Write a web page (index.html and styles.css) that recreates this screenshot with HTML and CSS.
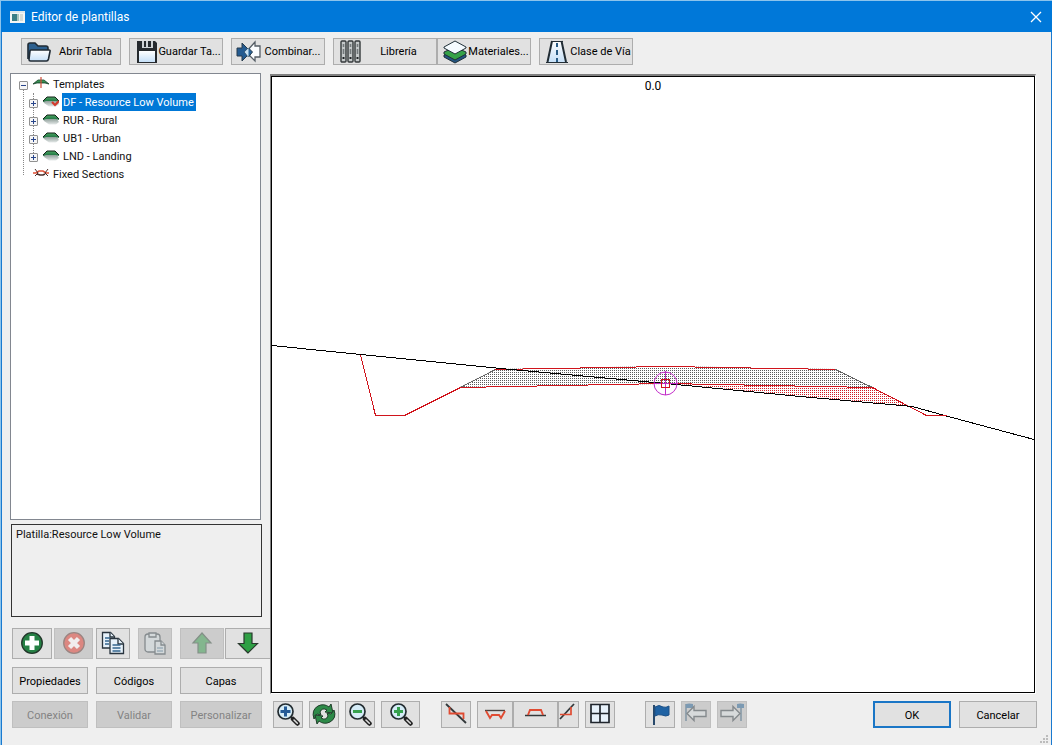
FILE: index.html
```html
<!DOCTYPE html>
<html lang="es">
<head>
<meta charset="utf-8">
<title>Editor de plantillas</title>
<link rel="stylesheet" href="styles.css">
</head>
<body>
<svg class="defs" width="0" height="0" aria-hidden="true">
  <defs>
    <linearGradient id="hill" x1="0" y1="0" x2="0" y2="1"><stop offset="0" stop-color="#4aa862"/><stop offset="1" stop-color="#1a6b3e"/></linearGradient>
    <linearGradient id="slab" x1="0" y1="0" x2="0" y2="1"><stop offset="0" stop-color="#8f9f99"/><stop offset="1" stop-color="#e6eaea"/></linearGradient>
    <linearGradient id="sky" x1="0" y1="0" x2="0" y2="1"><stop offset="0" stop-color="#fff"/><stop offset="1" stop-color="#c6e0f8"/></linearGradient>
    <symbol id="section" viewBox="0 0 16 12">
      <path d="M0 6h14l2 3-3 2.500H6L1 8z" fill="url(#slab)"/>
      <path d="M0 6l4-4h8l4 4v1l-3-1H3L0 7z" fill="url(#hill)"/>
      <path d="M0 6l4-4h8l4 4" fill="none" stroke="#142018"/>
    </symbol>
    <symbol id="lens" viewBox="0 0 24 24">
      <path d="M15 15l3 3" stroke="#222" stroke-width="2"/>
      <path d="M17 17l4.500 4.500" stroke="#222" stroke-width="4.500" stroke-linecap="round"/>
      <path d="M18 18l3.300 3.300" stroke="#ddd" stroke-width="1.600" stroke-linecap="round"/>
      <circle cx="9.500" cy="9.500" r="7.500" fill="#d5ecf7" stroke="#222b30" stroke-width="1.700"/>
    </symbol>
  </defs>
</svg>
<div class="window">
  <header class="titlebar">
    <svg width="15" height="12" viewBox="0 0 15 12"><path d="M0 0h15v12H0z" fill="#f3f6f4"/><path d="M2 3h5v7H2z" fill="#3a7f86"/><path d="M7 3h2v7H7z" fill="#a9c5bd"/><path d="M10 3h3v7h-3z" fill="#d5dbd6"/><path d="M0 0h15v2H0z" fill="#dfe8ea"/></svg>
    <h1>Editor de plantillas</h1>
    <button class="close" aria-label="Cerrar"><svg width="12" height="12" viewBox="0 0 12 12"><path d="M1 1l10 10M11 1L1 11" stroke="#fff" stroke-width="1.300"/></svg></button>
  </header>

  <nav class="toolbar">
    <button class="btn tool tool-wide"><svg width="26" height="24" viewBox="0 0 26 24"><path d="M2 19V5q0-2 2-2h5l3 3h8q2 0 2 2v3" fill="#2d608f" stroke="#202b35" stroke-width="1.600"/><path d="M5 10h18q1.500 0 1 1.500L22.500 19q-.5 2-2 2H4.500Q3 21 3 19.500L4 11q0-1 1-1z" fill="url(#sky)" stroke="#202b35" stroke-width="1.600"/></svg><span>Abrir Tabla</span></button>
    <button class="btn tool tool-tight"><svg width="22" height="24" viewBox="0 0 22 24"><path d="M1 1h18l2 2v20H1z" fill="#262a2e"/><path d="M6 1h11v7H6z" fill="#cfd3d6"/><path d="M8 1h2v6H8zM12 1h3v6h-3z" fill="#262a2e"/><path d="M3 11h16v11H3z" fill="url(#sky)"/></svg><span>Guardar Ta...</span></button>
    <button class="btn tool"><svg width="26" height="24" viewBox="0 0 26 24"><path d="M1 8h5V3l9 9-9 9v-5H1V8z" fill="#245b91" stroke="#263b4c"/><path d="M24 6h-5V2l-9 10 9 9v-4h5z" fill="#fbfdff" stroke="#555e66" stroke-width="1.300"/><path d="M12.500 8l4 4-4 5-4-5z" fill="#286399" stroke="#263b4c"/><path d="M12.500 8v9l-4-5z" fill="#c8e3f5"/></svg><span>Combinar...</span></button>
    <div class="joined">
      <button class="btn tool tool-wide"><svg width="24" height="24" viewBox="0 0 24 24"><g fill="#c5c9ca" stroke="#34393b" stroke-width="1.400"><rect x="3" y="1" width="5" height="21" rx="1"/><rect x="10" y="1" width="5" height="21" rx="1"/><rect x="17" y="1" width="5" height="21" rx="1"/></g><path d="M5.500 4v3M12.500 4v3M19.500 4v3M5.500 9v5M12.500 9v5M19.500 9v5" stroke="#73797b" stroke-width="1.600"/><path d="M4.500 18h2M11.500 18h2M18.500 18h2" stroke="#202426" stroke-width="2"/></svg><span>Librería</span></button>
      <button class="btn tool"><svg width="26" height="24" viewBox="0 0 26 24"><g stroke="#203038"><path d="M2 15l11-5 11 5v2l-11 6-11-6z" fill="#245581"/><path d="M2 12l11-5 11 5v2l-11 6-11-6z" fill="#36a248"/><path d="M2 7l11-6 11 6v1l-11 6L2 8z" fill="#f5fbff"/></g></svg><span>Materiales...</span></button>
    </div>
    <button class="btn tool tool-tight"><svg width="24" height="24" viewBox="0 0 24 24"><path d="M6 1h10l5 21H1z" fill="url(#sky)"/><path d="M6 1L1.500 22M15.500 1L20 22" stroke="#222d35" stroke-width="2"/><path d="M5 1.500h12M0 22.500h22" stroke="#222d35"/><path d="M11 3v4M11 10v5M11 18v4" stroke="#295b84" stroke-width="2"/></svg><span>Clase de Vía</span></button>
  </nav>

  <main class="work">
    <section class="side">
      <div class="tree">
        <ul>
          <li>
            <div class="row"><button class="twist" aria-label="Contraer"><svg width="7" height="7" viewBox="0 0 7 7"><path d="M1 3h5v1H1z" fill="#28458b"/></svg></button><svg width="16" height="12" viewBox="0 0 16 12"><path d="M0 7l5-4h6l5 4-4-1H4z" fill="url(#hill)" stroke="#174027" stroke-width=".8"/><path d="M8 0v11" stroke="#d14b38" stroke-width="1.200"/></svg><span>Templates</span></div>
            <ul>
              <li class="row"><button class="twist" aria-label="Expandir"><svg width="7" height="7" viewBox="0 0 7 7"><path d="M1 3h2V1h1v2h2v1H4v2H3V4H1z" fill="#28458b"/></svg></button><svg width="16" height="12" viewBox="0 0 16 12"><use href="#section"/><path d="M9 7l3 3 4-4" fill="none" stroke="#d33a2c" stroke-width="2.200"/></svg><span class="selected">DF - Resource Low Volume</span></li>
              <li class="row"><button class="twist" aria-label="Expandir"><svg width="7" height="7" viewBox="0 0 7 7"><path d="M1 3h2V1h1v2h2v1H4v2H3V4H1z" fill="#28458b"/></svg></button><svg width="16" height="12"><use href="#section"/></svg><span>RUR - Rural</span></li>
              <li class="row"><button class="twist" aria-label="Expandir"><svg width="7" height="7" viewBox="0 0 7 7"><path d="M1 3h2V1h1v2h2v1H4v2H3V4H1z" fill="#28458b"/></svg></button><svg width="16" height="12"><use href="#section"/></svg><span>UB1 - Urban</span></li>
              <li class="row"><button class="twist" aria-label="Expandir"><svg width="7" height="7" viewBox="0 0 7 7"><path d="M1 3h2V1h1v2h2v1H4v2H3V4H1z" fill="#28458b"/></svg></button><svg width="16" height="12"><use href="#section"/></svg><span>LND - Landing</span></li>
            </ul>
          </li>
          <li class="row leaf"><svg width="16" height="12" viewBox="0 0 16 12"><path d="M0 6h3l3-2h4l3 2h3" fill="none" stroke="#e05238" stroke-width="1.600"/><path d="M2 2l3 4-3 3M15 2l-3 4 3 3" fill="none" stroke="#4b302c"/><path d="M4 7l3 1h3l2-1" fill="none" stroke="#4b302c" stroke-width="1.600"/></svg><span>Fixed Sections</span></li>
        </ul>
      </div>
      <div class="info">Platilla:Resource Low Volume</div>
      <div class="icons">
        <button class="btn w40" aria-label="Agregar"><svg width="24" height="24" viewBox="0 0 24 24"><circle cx="12" cy="12" r="10.300" fill="#258044" stroke="#22362a" stroke-width="1.300"/><path d="M9.500 5h5v4.500H19v5h-4.500V19h-5v-4.500H5v-5h4.500z" fill="#fff"/></svg></button>
        <button class="btn w39" disabled aria-label="Eliminar"><svg width="24" height="24" viewBox="0 0 24 24"><circle cx="12" cy="12" r="10.300" fill="#dc8781" stroke="#9b8582" stroke-width="1.300"/><path d="M7.500 7.500l9 9M16.500 7.500l-9 9" stroke="#f1eded" stroke-width="4.500"/></svg></button>
        <button class="btn w34 after-pair" aria-label="Copiar"><svg width="24" height="24" viewBox="0 0 24 24"><g fill="#e6f1fa" stroke="#29343e" stroke-width="1.300"><path d="M1.500 1.500h8l4 4V17h-12z"/><path d="M9 1.500V6h4.500"/><path d="M9 7.500h8.500l5 5V22.500H9z"/><path d="M17 7.500V13h5.500"/></g><path d="M4 7h5M4 10h4M4 13h4M11.500 14h8M11.500 17h8M11.500 20h8" stroke="#34658f" stroke-width="1.300"/></svg></button>
        <button class="btn w34 spaced" disabled aria-label="Pegar"><svg width="24" height="24" viewBox="0 0 24 24"><g fill="#d3d8da" stroke="#858b8e" stroke-width="1.300"><rect x="2" y="3" width="15" height="18" rx="3"/><path d="M6 2h7v4H6z"/><path d="M12 10h6l4 4v9H12z"/><path d="M18 10v4h4"/></g><path d="M14 17h6M14 20h6" stroke="#8299a9"/></svg></button>
        <button class="btn w44 spaced" disabled aria-label="Subir"><svg width="24" height="24" viewBox="0 0 24 24"><path d="M12 2l9 10h-5v10H8V12H3z" fill="#83b68e" stroke="#849088" stroke-width="1.200"/></svg></button>
        <button class="btn w45" aria-label="Bajar"><svg width="24" height="24" viewBox="0 0 24 24"><path d="M12 22L2.500 12.500H8V2h8v10.500h5.500z" fill="#2fa045" stroke="#29392d" stroke-width="1.200"/></svg></button>
      </div>
      <div class="actions">
        <button class="btn">Propiedades</button><button class="btn">Códigos</button><button class="btn">Capas</button>
        <button class="btn" disabled>Conexión</button><button class="btn" disabled>Validar</button><button class="btn" disabled>Personalizar</button>
      </div>
    </section>

    <section class="view">
      <div class="canvas">
        <svg class="drawing" viewBox="272 77 762 615" role="img" aria-label="Sección transversal">
          <defs>
            <pattern id="dots" width="2" height="2" patternUnits="userSpaceOnUse"><rect width="1" height="1" fill="#5a5a5a"/></pattern>
            <pattern id="reddots" width="2" height="2" patternUnits="userSpaceOnUse"><rect width="1" height="1" fill="#d01c24"/></pattern>
          </defs>
          <text class="station" x="653" y="90" text-anchor="middle">0.0</text>
          <path d="M460 387L496 369L665 366L836 369L873 388L665 384z" fill="url(#dots)"/>
          <path d="M680 384L873 388L909 406L800 396z" fill="url(#reddots)"/>
          <g fill="none" shape-rendering="crispEdges">
            <path d="M460.500 387.500L495.500 369.500M835.500 369.500L872.500 387.500" stroke="#666"/>
            <path d="M495.500 369.500L665.500 366.500L835.500 369.500M360.500 354.500L375.500 415.500H404.500L460.500 387.500L665.500 383.500L872.500 387.500L926.500 415.500H946.500" stroke="#d0141c"/>
            <path d="M272 345.500L360.500 354.500L500.500 368.500L665.500 383.500L800.500 396.500L912.500 406.500L944.500 415.500L1034 439.500" stroke="#000"/>
            <path d="M926.500 415.500H946.500" stroke="#d0141c"/>
            <path d="M665.500 371v24M654 383.500h24" stroke="#c22bc8"/>
            <path d="M661.500 379.500h8v8h-8z" stroke="#d0141c"/>
          </g>
          <circle cx="665.500" cy="383.500" r="11.500" fill="none" stroke="#c22bc8"/>
        </svg>
      </div>
      <footer class="controls">
        <div class="group">
          <button class="btn w30" aria-label="Zoom ventana"><svg width="24" height="24" viewBox="0 0 24 24"><use href="#lens"/><path d="M9.500 4.500v10M4.500 9.500h10" stroke="#245a96" stroke-width="3"/></svg></button>
          <button class="btn w30" aria-label="Actualizar"><svg width="24" height="24" viewBox="0 0 24 24"><g fill="#2d8a48" stroke="#203d2a" stroke-linejoin="round"><path d="M2 17Q-1 8 6 4q6-3 11 1l2-3 2 9-8-1 2-2Q10 5 8 10l1 3-4-1z"/><path d="M22 8q3 8-4 12-6 3-11-1l-2 3-2-9 8 1-2 2q5 3 7-2l-1-3 4 1z"/></g></svg></button>
          <button class="btn w30" aria-label="Alejar"><svg width="24" height="24" viewBox="0 0 24 24"><use href="#lens"/><path d="M5 9.500h9" stroke="#36a14e" stroke-width="3"/></svg></button>
          <button class="btn w39" aria-label="Acercar"><svg width="24" height="24" viewBox="0 0 24 24"><use href="#lens"/><path d="M9.500 5v9M5 9.500h9" stroke="#36a14e" stroke-width="3"/></svg></button>
        </div>
        <div class="group">
          <button class="btn w30" aria-label="Talud mixto"><svg width="24" height="24" viewBox="0 0 24 24"><path d="M2 2l20 19" stroke="#33383a" stroke-width="1.800"/><path d="M5.500 5v6.500h14V17" fill="none" stroke="#e04b32" stroke-width="1.800"/></svg></button>
          <div class="joined">
            <button class="btn w36" aria-label="Corte"><svg width="24" height="24" viewBox="0 0 24 24"><path d="M2 8.500h20" stroke="#4a4340" stroke-width="1.400"/><path d="M3 9l4 7 2-3h7l2 3 4-7" fill="none" stroke="#e04b32" stroke-width="1.900"/></svg></button>
            <button class="btn w45" aria-label="Terraplén"><svg width="24" height="24" viewBox="0 0 24 24"><path d="M1 13.500h21" stroke="#33383a" stroke-width="1.500"/><path d="M4 13l2-5h11l2 5" fill="none" stroke="#e04b32" stroke-width="1.900"/></svg></button>
            <button class="btn w21" aria-label="Ladera"><svg width="20" height="24" viewBox="0 0 20 24"><path d="M1 17L15 2" stroke="#33383a" stroke-width="1.800"/><path d="M1 12.500h11V5" fill="none" stroke="#e04b32" stroke-width="1.700"/></svg></button>
          </div>
          <button class="btn w30" aria-label="Cuadrícula"><svg width="24" height="24" viewBox="0 0 24 24"><path d="M3 2.500h18v18H3zM12 2.500v18M3 11.500h18" fill="#e8f2fb" stroke="#20262d" stroke-width="1.700"/></svg></button>
        </div>
        <div class="group">
          <button class="btn w30" aria-label="Marcar"><svg width="24" height="24" viewBox="0 0 24 24"><path d="M6 3v20" stroke="#28496b" stroke-width="2"/><path d="M7 5q4-3 8 0 3 1 6-1v9q-3 2-7 0-4-1-7 1z" fill="#1f62a3" stroke="#1c5087"/></svg></button>
          <button class="btn w30" disabled aria-label="Anterior"><svg width="26" height="24" viewBox="0 0 26 24"><path d="M3 2v17" stroke="#8296a5" stroke-width="1.500"/><path d="M3 2q3-1 7 0v4H3z" fill="#7c9ab3"/><path d="M4 11.500l7-7v4h12v6H11v4z" fill="#d7dadb" stroke="#858a8d" stroke-width="1.400"/></svg></button>
          <button class="btn w30" disabled aria-label="Siguiente"><svg width="26" height="24" viewBox="0 0 26 24"><path d="M22 2v17" stroke="#8296a5" stroke-width="1.500"/><path d="M18 2q3-1 7 0v4h-7z" fill="#7c9ab3"/><path d="M21 11.500l-7-7v4H2v6h12v4z" fill="#d7dadb" stroke="#858a8d" stroke-width="1.400"/></svg></button>
        </div>
        <div class="dialog">
          <button class="btn primary">OK</button>
          <button class="btn">Cancelar</button>
        </div>
      </footer>
    </section>
  </main>
  <svg class="grip" width="9" height="9" viewBox="0 0 9 9"><path d="M6 0h2v2H6zM3 3h2v2H3zM6 3h2v2H6zM0 6h2v2H0zM3 6h2v2H3zM6 6h2v2H6z" fill="#bcbcbc"/></svg>
</div>
</body>
</html>
```

FILE: styles.css
```css
* { box-sizing: border-box; }
body {
  margin: 0;
  padding: 1px 0 0 1px;
  background: #8cc4ec;
  color: #111;
  font: 11px/18px Roboto, "Liberation Sans", sans-serif;
}
.defs { position: absolute; }
svg { display: block; flex: none; }
ul { list-style: none; margin: 0; padding: 0; }

.window {
  position: relative;
  display: flex;
  flex-direction: column;
  min-height: calc(100vh - 1px);
  background: #efefef;
  border: solid #1a7ad0;
  border-width: 0 1px 1px;
}
.titlebar {
  display: flex;
  align-items: center;
  gap: 6px;
  height: 31px;
  margin: 0 -1px;
  padding: 0 10px 0 9px;
  background: #0078d9;
  color: #fff;
}
.titlebar h1 { flex: 1; margin: 0; font-size: 12px; font-weight: 400; }
.close { display: flex; padding: 0; border: 0; background: none; }

.btn {
  display: flex;
  flex: none;
  align-items: center;
  justify-content: center;
  height: 27px;
  padding: 0;
  border: 1px solid #adadad;
  background: #e1e1e1;
  color: #000;
  font: inherit;
  white-space: nowrap;
}
.btn:disabled { background: #cccccc; border-color: #bfbfbf; color: #838383; }
.toolbar { display: flex; gap: 8px; padding: 6px 19px 8px; }
.joined { display: flex; }
.tool { width: 94px; padding: 0 1px 0 4px; }
.tool span { flex: 1; padding-top: 1px; text-align: center; }
.tool-wide { width: 100px; }
.tool-tight { padding-left: 6px; }
.joined .tool-wide { width: 104px; }

.work { display: flex; flex: 1; padding: 0 15px 17px 8px; }
.side { display: flex; flex-direction: column; width: 260px; flex: none; }
.tree {
  flex: 1;
  margin-right: 9px;
  padding: 1px 0 0 8px;
  border: 1px solid #828790;
  background: #fff;
}
.tree > ul { position: relative; }
.tree > ul::before, .tree li > ul::before {
  content: "";
  position: absolute;
  left: 4px;
  top: 14px;
  bottom: 8px;
  border-left: 1px dotted #888;
}
.tree li > ul { position: relative; padding-left: 10px; }
.tree li > ul::before { left: 14px; top: 0; bottom: 12px; }
.row { display: flex; align-items: center; height: 18px; }
.row > svg { margin: 0 3px 2px 5px; }
.leaf > svg { margin-left: 14px; }
.row span { padding: 2px 2px 0 1px; line-height: 16px; }
.row .selected { background: #0078d7; color: #fff; }
.twist {
  position: relative;
  width: 9px;
  height: 9px;
  margin-top: 2px;
  padding: 0;
  border: 1px solid #919191;
  border-radius: 1px;
  background: #f6f6f6;
}
.info {
  height: 93px;
  margin: 4px 8px 11px 1px;
  padding: 1px 4px;
  border: 1px solid #333;
}
.icons { display: flex; padding-left: 2px; overflow: hidden; }
.icons .btn { height: 31px; padding-bottom: 1px; }
.icons .w39 { margin-left: 2px; }
.icons .after-pair { margin-left: 3px; }
.icons .spaced { margin-left: 8px; }
.icons .w45 { margin-left: 1px; border-right: 0; }
.w21 { width: 21px; }
.w30 { width: 30px; }
.w34 { width: 34px; }
.w36 { width: 36px; }
.w39 { width: 39px; }
.w40 { width: 40px; }
.w44 { width: 44px; }
.w45 { width: 45px; }
.actions {
  display: grid;
  grid-template-columns: 76px 76px 82px;
  gap: 7px 8px;
  padding: 8px 0 0 2px;
}
.actions .btn, .dialog .btn { padding-top: 2px; }

.view { display: flex; flex: 1; flex-direction: column; min-width: 0; padding-top: 1px; }
.canvas {
  display: flex;
  flex: 1;
  min-height: 0;
  border: solid;
  border-width: 2px 1px 1px;
  border-color: #808080 #fff #fff #808080;
}
.drawing {
  flex: 1;
  min-width: 0;
  width: 100%;
  border: 1px solid #000;
  background: #fff;
}
.station { font-size: 12px; }
.controls { display: flex; gap: 21px; padding: 7px 0 0 3px; }
.group { display: flex; gap: 6px; }
.group .btn { padding-bottom: 1px; overflow: hidden; }
.controls .group + .group + .group { margin-left: 9px; }
.dialog { display: flex; gap: 8px; margin: 0 -1px 0 auto; }
.dialog .btn { width: 78px; }
.primary { border: 2px solid #1a76c6; }
.grip { position: absolute; right: 2px; bottom: 1px; }
```
